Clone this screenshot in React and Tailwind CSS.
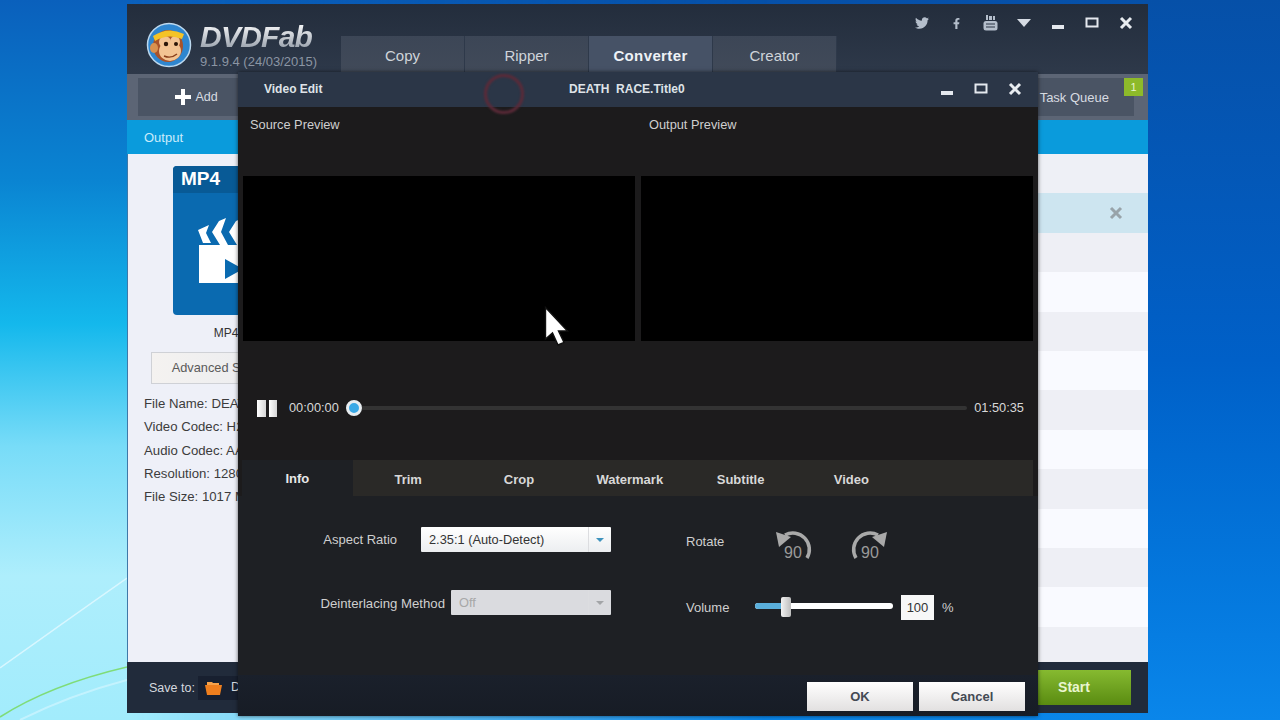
import React from "react";
import { FaTwitter, FaFacebookF } from "react-icons/fa";

const tabs = ["Copy", "Ripper", "Converter", "Creator"];
const editTabs = ["Info", "Trim", "Crop", "Watermark", "Subtitle", "Video"];
const fileInfo = [
  "File Name: DEATH RACE",
  "Video Codec: H264",
  "Audio Codec: AAC",
  "Resolution: 1280x544",
  "File Size: 1017 MB",
];
const rowColors = [
  "bg-[#eef0f6]",
  "bg-[#cde5f0]",
  "bg-[#eeeff5]",
  "bg-[#f9faff]",
  "bg-[#eeeff5]",
  "bg-[#f9faff]",
  "bg-[#eeeff5]",
  "bg-[#f9faff]",
  "bg-[#eeeff5]",
  "bg-[#f9faff]",
  "bg-[#eeeff5]",
  "bg-[#f9faff]",
  "bg-[#eeeff5]",
];

function MinIcon() {
  return (
    <svg width="14" height="14" viewBox="0 0 14 14">
      <rect x="1" y="9" width="12" height="4" fill="#e4e8ee" />
    </svg>
  );
}

function MaxIcon() {
  return (
    <svg width="14" height="14" viewBox="0 0 14 14">
      <rect x="1.5" y="2.5" width="11" height="8" fill="none" stroke="#e4e8ee" strokeWidth="2" />
    </svg>
  );
}

function CloseIcon({ color = "#e8ecf0", size = 14 }) {
  return (
    <svg width={size} height={size} viewBox="0 0 14 14">
      <path d="M2 2 L12 12 M12 2 L2 12" stroke={color} strokeWidth="3" />
    </svg>
  );
}

function TubeIcon() {
  return (
    <svg width="15" height="16" viewBox="0 0 15 16">
      <rect x="3" y="0" width="2" height="5" fill="#b4becb" />
      <rect x="6" y="1" width="3" height="4" fill="#b4becb" />
      <rect x="10" y="1" width="2" height="4" fill="#b4becb" />
      <rect x="0.5" y="6" width="14" height="9.5" rx="2.5" fill="#b4becb" />
      <path d="M3 9h9M3 12h9" stroke="#2a3444" strokeWidth="1" />
    </svg>
  );
}

function Monkey() {
  return (
    <svg width="46" height="46" viewBox="0 0 46 46" className="flex-none">
      <circle cx="23" cy="23" r="21.5" fill="#2f86cf" stroke="#bcd8ee" strokeWidth="1.5" />
      <ellipse cx="22" cy="24" rx="15" ry="16" fill="#a9532a" />
      <ellipse cx="8" cy="26" rx="4" ry="5" fill="#d9914f" />
      <ellipse cx="24" cy="29" rx="11" ry="10" fill="#f3c493" />
      <ellipse cx="19" cy="20" rx="6" ry="6" fill="#f3c493" />
      <ellipse cx="29" cy="20" rx="5" ry="6" fill="#f3c493" />
      <path d="M7 14 Q22 4 38 12 L36 17 Q22 11 9 19 Z" fill="#f4c327" />
      <circle cx="20" cy="22" r="2.2" fill="#2b1608" />
      <circle cx="30" cy="22" r="2" fill="#2b1608" />
      <path d="M18 34 Q25 37 31 32" stroke="#8a3f1b" strokeWidth="1.4" fill="none" />
    </svg>
  );
}

function Clapper() {
  return (
    <svg width="80" height="68" viewBox="0 0 80 68" className="ml-[25px] mt-[25px]">
      {/* board */}
      <path d="M1 27 L70 27 L70 65 L1 65 Z" fill="#fff" />
      {/* stripes */}
      <path d="M0 12 L11 7 L8 15 L13 25 L5 25 Z" fill="#fff" />
      <path d="M28 0 L21 3 L14 14 L22 27 L30 27 L23 14 Z" fill="#fff" />
      <path d="M45 0 L38 3 L31 14 L39 27 L47 27 L40 14 Z" fill="#fff" />
      <path d="M27 41 L45 51 L27 61 Z" fill="#0a6ab0" />
    </svg>
  );
}

function RotateIcon({ flip }) {
  return (
    <svg width="38" height="34" viewBox="0 0 38 34" className="flex-none">
      <g transform={flip ? "translate(38 0) scale(-1 1)" : undefined}>
        <path d="M32 31 A16.5 16.5 0 0 0 10 8" fill="none" stroke="#a9a9a9" strokeWidth="3.5" />
        <path d="M1 5 L16 10 L4 20 Z" fill="#a9a9a9" />
      </g>
      <text x={flip ? 20 : 18} y="31" textAnchor="middle" fontSize="16" fill="#9a9a9a" fontFamily="Liberation Sans">
        90
      </text>
    </svg>
  );
}

function Select({ value, disabled, width }) {
  return (
    <div
      className={`flex h-[25px] flex-none items-center rounded-[1px] ${width} ${
        disabled ? "bg-[#dadbdf] text-[#a8a8a8]" : "bg-gradient-to-b from-white to-[#eceef0] text-[#333]"
      }`}
    >
      <span className="flex-1 pl-2 text-[12.8px]">{value}</span>
      <span className="flex h-full w-[23px] items-center justify-center border-l border-[#dcdde0]">
        <span
          className={`h-0 w-0 border-x-[4px] border-t-[4px] border-x-transparent ${
            disabled ? "border-t-[#a3a5a8]" : "border-t-[#3f93bd]"
          }`}
        />
      </span>
    </div>
  );
}

function MainWindow() {
  return (
    <div className="absolute left-[127px] top-1 flex h-[709px] w-[1021px] flex-col">
      {/* Header */}
      <header className="flex h-[70px] flex-none bg-gradient-to-b from-[#232d3c] to-[#2e394a]">
        <div className="flex w-[214px] flex-none items-start pl-[19px] pt-[18px]">
          <Monkey />
          <div className="ml-2 flex flex-col">
            <span className="bg-gradient-to-b from-white to-[#8f98a4] bg-clip-text text-[30px] font-bold italic leading-[30px] tracking-tight text-transparent">
              DVDFab
            </span>
            <span className="mt-[3px] whitespace-nowrap text-[13px] leading-[14px] text-[#8b95a3]">9.1.9.4 (24/03/2015)</span>
          </div>
        </div>
        <div className="flex self-end pb-[2px]">
          {tabs.map((t) => (
            <div
              key={t}
              className={`flex h-9 w-[124px] items-center justify-center border-r border-[#2e394a] pt-[5px] ${
                t === "Converter"
                  ? "bg-[#465266] text-[15px] font-bold tracking-wide text-[#eef2f6]"
                  : "bg-gradient-to-b from-[#3c4656] to-[#414a59] text-[15px] text-[#cfd4da]"
              }`}
            >
              {t}
            </div>
          ))}
        </div>
        <div className="ml-auto flex self-start pr-[5px] pt-[2px] text-[#b4becb]">
          <span className="flex h-[34px] w-[34px] items-center justify-center"><FaTwitter size={14} /></span>
          <span className="flex h-[34px] w-[34px] items-center justify-center"><FaFacebookF size={11} /></span>
          <span className="flex h-[34px] w-[34px] items-center justify-center"><TubeIcon /></span>
          <span className="flex h-[34px] w-[34px] items-center justify-center">
            <span className="h-0 w-0 border-x-[7px] border-t-[8px] border-x-transparent border-t-[#d5dbe3]" />
          </span>
          <span className="flex h-[34px] w-[34px] items-center justify-center"><MinIcon /></span>
          <span className="flex h-[34px] w-[34px] items-center justify-center"><MaxIcon /></span>
          <span className="flex h-[34px] w-[34px] items-center justify-center"><CloseIcon /></span>
        </div>
      </header>

      {/* Toolbar */}
      <div className="relative flex h-[46px] flex-none justify-between bg-[#5c6575] pb-1 pl-[11px] pr-[14px] pt-1">
        <div className="flex w-[117px] items-center justify-center bg-[#4a5464] text-[12.5px] text-[#d7dbe1]">
          <svg width="16" height="16" viewBox="0 0 16 16">
            <path d="M6 0h4v6h6v4h-6v6H6v-6H0V6h6z" fill="#fff" />
          </svg>
          <span className="ml-1">Add</span>
        </div>
        <div className="flex w-[134px] items-center justify-end bg-[#4a5464] pr-[25px] pt-[2px] text-[13px] text-[#d7dbe1]">Task Queue</div>
        <span className="absolute right-[5px] top-1 flex h-[18px] w-[19px] items-center justify-center bg-[#8dba2a] text-[11px] text-[#e8f3cc]">1</span>
      </div>

      {/* Output bar */}
      <div className="flex h-[34px] flex-none items-center bg-[#0a9bdc] pl-[17px] pt-[2px] text-[13px] text-[#c9ebfb]">Output</div>

      {/* Content */}
      <div className="flex h-[508px] flex-none border-l border-[#3f78a8]">
        <aside className="w-[220px] flex-none bg-[#eef0f8] pt-3 text-[#333]">
          <div className="ml-[45px] h-[149px] w-[104px] overflow-hidden rounded-[4px] bg-[#0a6ab0]">
            <div className="flex h-[27px] items-center bg-[#085a96] pl-2 text-[19px] font-bold text-white">MP4</div>
            <Clapper />
          </div>
          <p className="ml-[23px] mt-[11px] w-[150px] text-center text-[12px] leading-[14px]">MP4</p>
          <div className="ml-[23px] mt-[12px] flex h-8 w-[148px] items-center justify-center whitespace-nowrap border border-[#cfd1d6] bg-gradient-to-r from-[#f4f2f0] to-[#e9ebf0] text-[12.8px] text-[#5a5a5a]">
            Advanced Settings
          </div>
          <ul className="ml-4 mt-2">
            {fileInfo.map((line) => (
              <li key={line} className="h-[23.3px] whitespace-nowrap text-[13.2px] leading-[23.3px] text-[#3c3c3c]">
                {line}
              </li>
            ))}
          </ul>
        </aside>
        <div className="flex-1 overflow-hidden">
          {rowColors.map((c, i) => (
            <div key={i} className={`flex h-[39.4px] items-center justify-end pr-[25px] ${c}`}>
              {i === 1 && <CloseIcon color="#98a3a9" />}
            </div>
          ))}
        </div>
      </div>

      {/* Footer */}
      <footer className="flex h-[51px] flex-none items-center bg-[#212b3b] pl-[22px] pr-[17px]">
        <span className="pt-[1px] text-[12.5px] text-[#d5d9df]">Save to:</span>
        <div className="ml-[3px] flex h-[24px] w-[120px] items-center bg-[#182030] pl-[7px] text-[12.5px] text-[#d5d9df]">
          <svg width="17" height="15" viewBox="0 0 17 15" className="flex-none">
            <path d="M2 2h5l1 1h6v3H2z" fill="#f7a24a" />
            <path d="M0 5h17l-2 10H2z" fill="#f07f1e" />
          </svg>
          <span className="ml-[9px]">D:\</span>
        </div>
        <div className="ml-auto flex h-[35px] w-[120px] items-center justify-center bg-gradient-to-b from-[#86ba30] to-[#5a8c10] pl-[6px] text-[14px] font-bold text-[#eaf6cf]">
          Start
        </div>
      </footer>
    </div>
  );
}

function VideoEditDialog() {
  return (
    <div className="absolute left-[238px] top-[72px] flex h-[644px] w-[800px] flex-col bg-[#1c1b1c] shadow-[0_0_4px_rgba(0,0,0,0.6)]">
      {/* Title bar */}
      <div className="relative flex h-[35px] flex-none items-center bg-[#2b3647] pb-[2px] text-[12px] font-bold text-[#dfe3e8]">
        <span className="w-[331px] flex-none pl-[26px]">Video Edit</span>
        <span className="whitespace-pre">DEATH  RACE.Title0</span>
        <div className="ml-auto flex pr-[6px]">
          <span className="flex h-[34px] w-[34px] items-center justify-center"><MinIcon /></span>
          <span className="flex h-[34px] w-[34px] items-center justify-center"><MaxIcon /></span>
          <span className="flex h-[34px] w-[34px] items-center justify-center"><CloseIcon /></span>
        </div>
        {/* loading ring */}
        <span className="absolute left-[246px] top-[2px] h-[40px] w-[40px] rounded-full border-[3px] border-[#5c2a38] blur-[1px]" />
      </div>

      {/* Previews */}
      <div className="grid h-[69px] flex-none grid-cols-2 gap-[6px] px-[5px] pt-2 text-[12.8px] text-[#cfcfcf]">
        <span className="pl-[7px]">Source Preview</span>
        <span className="pl-2">Output Preview</span>
      </div>
      <div className="grid h-[165px] flex-none grid-cols-2 gap-[6px] px-[5px]">
        <div className="bg-black" />
        <div className="bg-black" />
      </div>

      {/* Player */}
      <div className="flex h-[119px] flex-none items-start pl-[19px] pr-[14px] pt-[55px] text-[12.8px] text-[#d8d8d8]">
        <div className="flex h-[24px] w-full items-center">
          <span className="h-[17px] w-[9px] bg-gradient-to-r from-white to-[#d5d5d5]" />
          <span className="ml-[3px] h-[17px] w-[8px] bg-gradient-to-r from-white to-[#d5d5d5]" />
          <span className="ml-3">00:00:00</span>
          <span className="ml-[7px] h-4 w-4 flex-none rounded-full border-[3px] border-[#e8edf0] bg-[#3aa9e6]" />
          <span className="h-1 flex-1 rounded-r-full bg-[#333333]" />
          <span className="ml-[7px]">01:50:35</span>
        </div>
      </div>

      {/* Edit tabs */}
      <div className="ml-1 mr-[5px] flex h-9 flex-none bg-[#2a2927] text-[13px] font-bold text-[#d8d8d8]">
        {editTabs.map((t) => (
          <div
            key={t}
            className={`flex w-[110.8px] justify-center ${t === "Info" ? "bg-[#1e2024] pt-[9px] text-[#e8e8e8]" : "pt-[10px]"}`}
          >
            {t}
          </div>
        ))}
      </div>

      {/* Settings */}
      <div className="flex h-[179px] flex-none bg-[#1e2024] pt-[31px] text-[13px] text-[#cfcfcf]">
        <div className="flex w-[373px] flex-none flex-col gap-[38px]">
          <div className="flex items-center justify-end gap-6">
            <span>Aspect Ratio</span>
            <Select value="2.35:1 (Auto-Detect)" width="w-[190px]" />
          </div>
          <div className="flex items-center justify-end gap-[6px]">
            <span className="pt-[2px] text-[13.2px]">Deinterlacing Method</span>
            <Select value="Off" width="w-[160px]" disabled />
          </div>
        </div>
        <div className="ml-[75px] flex flex-col gap-[35px]">
          <div className="flex h-[33px] items-center">
            <span className="w-[89px] pb-[3px]">Rotate</span>
            <RotateIcon />
            <span className="w-[37px]" />
            <RotateIcon flip />
          </div>
          <div className="flex h-[25px] items-center">
            <span className="w-[69px]">Volume</span>
            <div className="relative mb-[3px] h-[6px] w-[138px] rounded-sm bg-white">
              <div className="h-full w-[31px] rounded-l-sm bg-[#5aafdc]" />
              <span className="absolute left-[26px] top-[-6px] h-5 w-[10px] rounded-[2px] bg-gradient-to-r from-[#f2f2f2] to-[#bdbdbd]" />
            </div>
            <span className="ml-2 flex h-[25px] w-[33px] items-center justify-center bg-[#f7f7f7] text-[#333]">100</span>
            <span className="ml-2">%</span>
          </div>
        </div>
      </div>

      {/* Dialog footer */}
      <div className="flex h-[41px] flex-none justify-end gap-[6px] bg-gradient-to-b from-[#1a202b] to-[#171c25] pr-[13px] pt-[7px]">
        <div className="flex h-[29px] w-[106px] items-center justify-center bg-gradient-to-b from-white to-[#e2e0e0] text-[13px] font-bold text-[#444a54]">
          OK
        </div>
        <div className="flex h-[29px] w-[106px] items-center justify-center bg-gradient-to-b from-white to-[#e2e0e0] text-[13px] font-bold text-[#444a54]">
          Cancel
        </div>
      </div>
    </div>
  );
}

export default function App() {
  return (
    <div className="relative h-[720px] w-[1280px] overflow-hidden bg-gradient-to-b from-[#0650a8] via-[#0060c8] to-[#0a86ea] font-['Liberation_Sans',sans-serif]">
      {/* Wallpaper */}
      <div className="absolute inset-0 bg-[linear-gradient(180deg,#0a60bc_0%,#0a84d2_25%,#14b8ec_45%,#78dcf8_62%,#aeeefc_80%,#a2ecfc_100%)] [mask-image:linear-gradient(to_right,black_10%,transparent_60%)]" />
      <svg width="127" height="720" viewBox="0 0 127 720" className="absolute left-0 top-0">
        <path d="M0 668 Q60 625 127 578" stroke="#e4f9ff" strokeWidth="1.5" fill="none" opacity="0.8" />
        <path d="M0 717 Q50 685 127 667" stroke="#7fdc78" strokeWidth="1.5" fill="none" />
        <path d="M20 720 Q70 695 127 680" stroke="#d8f7ff" strokeWidth="2" fill="none" opacity="0.6" />
      </svg>

      <MainWindow />
      <VideoEditDialog />

      {/* Mouse cursor */}
      <svg width="26" height="42" viewBox="0 0 26 42" className="absolute left-[544px] top-[306px]">
        <path d="M1.5 1.5 L1.5 33 L8.5 27 L14 39 L20 36.5 L14.5 25 L23.5 25 Z" fill="#fff" stroke="#111" strokeWidth="1.4" />
      </svg>
    </div>
  );
}
